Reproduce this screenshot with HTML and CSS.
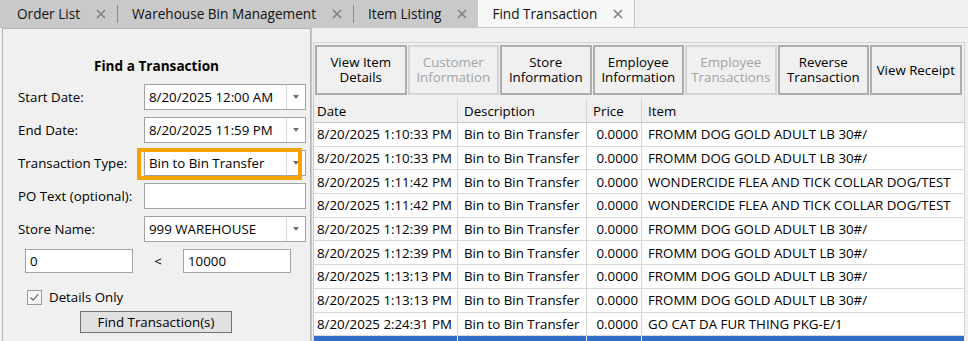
FILE: index.html
```html
<!DOCTYPE html>
<html>
<head>
<meta charset="utf-8">
<link rel="stylesheet" href="styles.css">
</head>
<body>
<div class="tabs">
  <div class="tabgroup">
    <div class="tab first"><span>Order List</span><svg class="x" viewBox="0 0 10 10"><path d="M1 1L9 9M9 1L1 9"/></svg></div>
    <span class="sep"></span>
    <div class="tab"><span>Warehouse Bin Management</span><svg class="x" viewBox="0 0 10 10"><path d="M1 1L9 9M9 1L1 9"/></svg></div>
    <span class="sep"></span>
    <div class="tab"><span>Item Listing</span><svg class="x" viewBox="0 0 10 10"><path d="M1 1L9 9M9 1L1 9"/></svg></div>
  </div>
  <div class="tab active"><span>Find Transaction</span><svg class="x" viewBox="0 0 10 10"><path d="M1 1L9 9M9 1L1 9"/></svg></div>
</div>
<div class="main">
  <aside class="left">
    <h1 class="title">Find a Transaction</h1>
    <div class="form">
      <label>Start Date:</label>
      <div class="combo"><span class="val">8/20/2025 12:00 AM</span><span class="drop"><i class="arrow"></i></span></div>
      <label>End Date:</label>
      <div class="combo"><span class="val">8/20/2025 11:59 PM</span><span class="drop"><i class="arrow"></i></span></div>
      <label>Transaction Type:</label>
      <div class="combo"><span class="val">Bin to Bin Transfer</span><span class="drop"><i class="arrow"></i></span><span class="highlight"></span></div>
      <label>PO Text (optional):</label>
      <div class="input"></div>
      <label>Store Name:</label>
      <div class="combo"><span class="val">999 WAREHOUSE</span><span class="drop"><i class="arrow"></i></span></div>
    </div>
    <div class="range">
      <div class="input small">0</div>
      <span class="lt">&lt;</span>
      <div class="input small">10000</div>
    </div>
    <div class="check">
      <span class="box"><svg viewBox="0 0 15 15"><path d="M3 7.5L6 10.5L12 3.5"/></svg></span>
      <span>Details Only</span>
    </div>
    <button class="find">Find Transaction(s)</button>
  </aside>
  <section class="right">
    <div class="toolbar">
      <div class="tbtn"><span>View Item</span><span>Details</span></div>
      <div class="tbtn disabled"><span>Customer</span><span>Information</span></div>
      <div class="tbtn"><span>Store</span><span>Information</span></div>
      <div class="tbtn"><span>Employee</span><span>Information</span></div>
      <div class="tbtn disabled"><span>Employee</span><span>Transactions</span></div>
      <div class="tbtn"><span>Reverse</span><span>Transaction</span></div>
      <div class="tbtn"><span>View Receipt</span></div>
    </div>
    <div class="grid">
      <div class="h d">Date</div><div class="h">Description</div><div class="h">Price</div><div class="h">Item</div>

      <div class="c d">8/20/2025 1:10:33 PM</div><div class="c">Bin to Bin Transfer</div><div class="c num">0.0000</div><div class="c">FROMM DOG GOLD ADULT LB 30#/</div>
      <div class="c d">8/20/2025 1:10:33 PM</div><div class="c">Bin to Bin Transfer</div><div class="c num">0.0000</div><div class="c">FROMM DOG GOLD ADULT LB 30#/</div>
      <div class="c d">8/20/2025 1:11:42 PM</div><div class="c">Bin to Bin Transfer</div><div class="c num">0.0000</div><div class="c">WONDERCIDE FLEA AND TICK COLLAR DOG/TEST</div>
      <div class="c d">8/20/2025 1:11:42 PM</div><div class="c">Bin to Bin Transfer</div><div class="c num">0.0000</div><div class="c">WONDERCIDE FLEA AND TICK COLLAR DOG/TEST</div>
      <div class="c d">8/20/2025 1:12:39 PM</div><div class="c">Bin to Bin Transfer</div><div class="c num">0.0000</div><div class="c">FROMM DOG GOLD ADULT LB 30#/</div>
      <div class="c d">8/20/2025 1:12:39 PM</div><div class="c">Bin to Bin Transfer</div><div class="c num">0.0000</div><div class="c">FROMM DOG GOLD ADULT LB 30#/</div>
      <div class="c d">8/20/2025 1:13:13 PM</div><div class="c">Bin to Bin Transfer</div><div class="c num">0.0000</div><div class="c">FROMM DOG GOLD ADULT LB 30#/</div>
      <div class="c d">8/20/2025 1:13:13 PM</div><div class="c">Bin to Bin Transfer</div><div class="c num">0.0000</div><div class="c">FROMM DOG GOLD ADULT LB 30#/</div>
      <div class="c d">8/20/2025 2:24:31 PM</div><div class="c">Bin to Bin Transfer</div><div class="c num">0.0000</div><div class="c">GO CAT DA FUR THING PKG-E/1</div>

      <div class="c d sel"></div><div class="c sel"></div><div class="c num sel"></div><div class="c sel"></div>
    </div>
  </section>
</div>
</body>
</html>
```
FILE: styles.css
```css
* { box-sizing: border-box; }
html, body { margin: 0; overflow: hidden; }
body {
  width: 968px;
  height: 341px;
  background: #f0f0f0;
  font-family: "Open Sans", "Noto Sans", sans-serif;
  font-size: 13.3px;
  color: #000;
}

/* tabs */
.tabs {
  display: flex;
  height: 28px;
  border-bottom: 1px solid #c4c4c4;
}
.tabgroup {
  display: flex;
  align-items: center;
  height: 27px;
  background: #c9c9c9;
}
.tab {
  display: flex;
  align-items: center;
  height: 27px;
  padding: 0 11px 0 14px;
  font-size: 13.6px;
  color: #111;
}
.tab.first { padding-left: 17px; }
.tab.active {
  background: #f7f7f7;
  border-right: 1px solid #c4c4c4;
}
.x {
  width: 10px;
  height: 10px;
  margin-left: 16px;
  fill: none;
  stroke: #7d7d7d;
  stroke-width: 1.5;
}
.sep {
  width: 1px;
  height: 18px;
  background: #8c8c8c;
}

/* main */
.main {
  display: flex;
  height: 313px;
}
.left {
  width: 309px;
  margin-left: 2px;
  border: 1px solid #b4b4b4;
  border-bottom: none;
}
.title {
  margin: 28px 0 0;
  font-size: 13.6px;
  font-weight: 700;
  line-height: 18px;
  text-align: center;
}
.form {
  display: grid;
  grid-template-columns: 126px 162px;
  grid-auto-rows: 26px;
  row-gap: 7px;
  align-items: center;
  margin-top: 9px;
  padding-left: 15px;
}
.form label { white-space: nowrap; }
.combo {
  position: relative;
  display: flex;
  height: 26px;
  background: #fff;
  border: 1px solid #a2a2a2;
}
.val {
  flex: 1;
  padding-left: 4px;
  line-height: 24px;
  white-space: nowrap;
}
.drop {
  width: 19px;
  border-left: 1px solid #dadada;
  display: flex;
  align-items: center;
  justify-content: center;
}
.arrow {
  width: 0;
  height: 0;
  border-left: 3.5px solid transparent;
  border-right: 3.5px solid transparent;
  border-top: 4px solid #707070;
}
.highlight {
  position: absolute;
  left: -8px;
  top: -3px;
  width: 165px;
  height: 32px;
  border: 4px solid #f4a300;
}
.input {
  height: 26px;
  background: #fff;
  border: 1px solid #a2a2a2;
  padding-left: 4px;
  line-height: 24px;
}
.range {
  display: flex;
  align-items: center;
  margin-top: 7px;
  padding-left: 22px;
}
.input.small {
  width: 108px;
  height: 24px;
  line-height: 22px;
}
.lt {
  width: 50px;
  text-align: center;
}
.check {
  display: flex;
  align-items: center;
  gap: 7px;
  margin-top: 16px;
  padding-left: 24px;
  height: 16px;
}
.box {
  width: 15px;
  height: 15px;
  border: 1px solid #9a9a9a;
  background: #f6f6f6;
  display: flex;
}
.box svg {
  width: 13px;
  height: 13px;
  fill: none;
  stroke: #666;
  stroke-width: 1.3;
}
.find {
  display: block;
  margin: 6px 0 0 77px;
  width: 152px;
  height: 22px;
  padding: 0;
  background: #e1e1e1;
  border: 1px solid #707070;
  font: inherit;
  color: #000;
}

/* right */
.right {
  flex: 1;
  border-top: 1px solid #c8c8c8;
  border-left: 1px solid #c8c8c8;
  margin-top: -1px;
  padding: 14px 0 0 1px;
}
.toolbar {
  display: flex;
  gap: 1px;
  width: 652px;
  height: 57px;
  padding: 2px 1px;
  border: 1px solid #d4d4d4;
  border-bottom: none;
}
.tbtn {
  flex: 0 0 91.5px;
  height: 50px;
  border: 2px solid #adadad;
  background: #f0f0f0;
  display: flex;
  flex-direction: column;
  align-items: center;
  justify-content: center;
  text-align: center;
}
.tbtn span {
  display: block;
  height: 15px;
  line-height: 15px;
  white-space: nowrap;
}
.tbtn.disabled {
  color: #a3a3a3;
  border-color: #d4d4d4;
}
.grid {
  display: grid;
  grid-template-columns: 144px 129px 55px 323px;
  grid-template-rows: 24px;
  grid-auto-rows: 23.7px;
  width: 652px;
  background: #fff;
  border-left: 1px solid #c8c8c8;
}
.h, .c {
  display: flex;
  align-items: center;
  padding: 0 5px 0 6px;
  white-space: nowrap;
  overflow: hidden;
  border-right: 1px solid #d4d4d4;
  border-bottom: 1px solid #dadada;
}
.h {
  background: #f0f0f0;
  border-bottom-color: #c8c8c8;
}
.d { padding-left: 3px; }
.c.num { justify-content: flex-end; padding-right: 3px; }
.c.sel {
  background: #306ec8;
  border-right-color: #e6eef8;
}
```
